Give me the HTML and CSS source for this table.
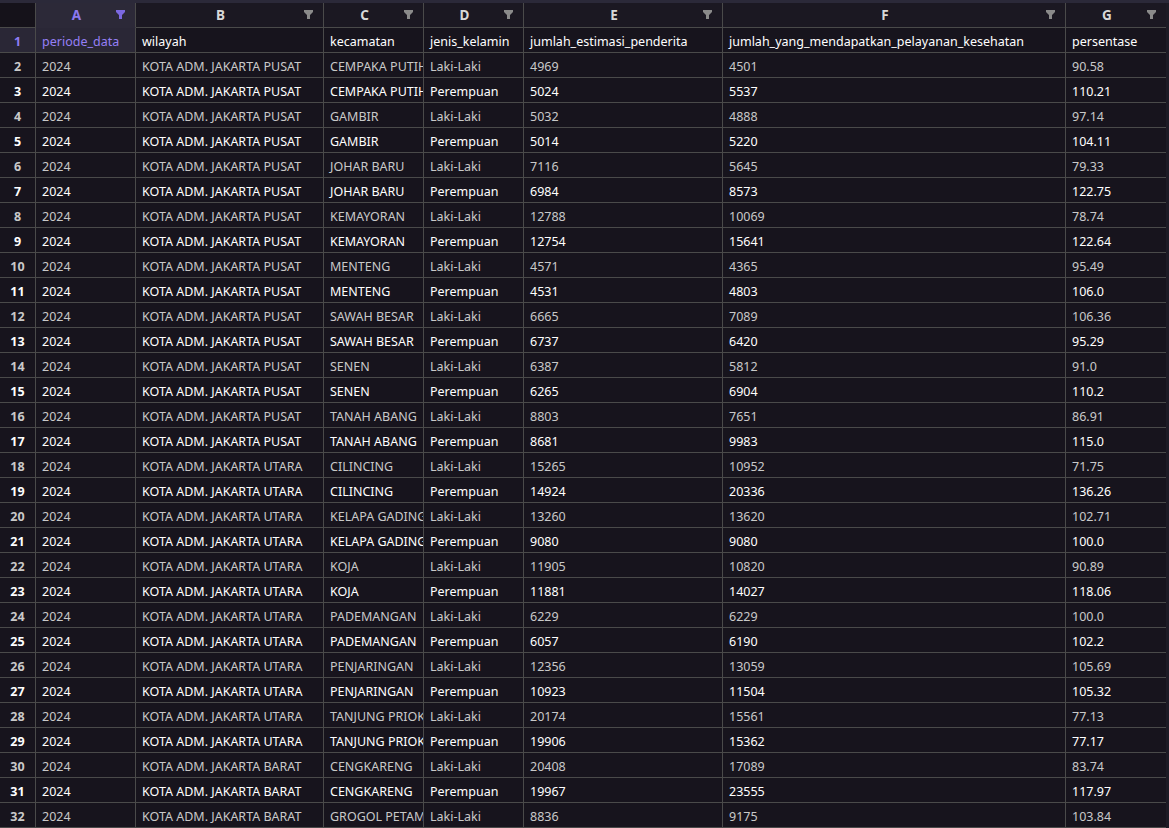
FILE: index.html
```html
<!DOCTYPE html>
<html lang="id">
<head>
<meta charset="utf-8">
<title>Data</title>
<link rel="stylesheet" href="styles.css">
</head>
<body>
<div class="topstrip"></div>
<div class="sheet">
  <div class="row head">
    <div class="c num corner"></div>
    <div class="c col sel">A<svg class="flt" viewBox="0 0 9 9"><path d="M0 0h9v2L6 5v4H3V5L0 2z"/></svg></div>
    <div class="c col">B<svg class="flt" viewBox="0 0 9 9"><path d="M0 0h9v2L6 5v4H3V5L0 2z"/></svg></div>
    <div class="c col">C<svg class="flt" viewBox="0 0 9 9"><path d="M0 0h9v2L6 5v4H3V5L0 2z"/></svg></div>
    <div class="c col">D<svg class="flt" viewBox="0 0 9 9"><path d="M0 0h9v2L6 5v4H3V5L0 2z"/></svg></div>
    <div class="c col">E<svg class="flt" viewBox="0 0 9 9"><path d="M0 0h9v2L6 5v4H3V5L0 2z"/></svg></div>
    <div class="c col">F<svg class="flt" viewBox="0 0 9 9"><path d="M0 0h9v2L6 5v4H3V5L0 2z"/></svg></div>
    <div class="c col">G<svg class="flt" viewBox="0 0 9 9"><path d="M0 0h9v2L6 5v4H3V5L0 2z"/></svg></div>
  </div>
  <div class="row odd">
    <div class="c num sel">1</div><div class="c sel">periode_data</div><div class="c">wilayah</div><div class="c">kecamatan</div><div class="c">jenis_kelamin</div><div class="c">jumlah_estimasi_penderita</div><div class="c">jumlah_yang_mendapatkan_pelayanan_kesehatan</div><div class="c">persentase</div>
  </div>
  <div class="row even"><div class="c num">2</div><div class="c">2024</div><div class="c">KOTA ADM. JAKARTA PUSAT</div><div class="c">CEMPAKA PUTIH</div><div class="c">Laki-Laki</div><div class="c">4969</div><div class="c">4501</div><div class="c">90.58</div></div>
  <div class="row odd"><div class="c num">3</div><div class="c">2024</div><div class="c">KOTA ADM. JAKARTA PUSAT</div><div class="c">CEMPAKA PUTIH</div><div class="c">Perempuan</div><div class="c">5024</div><div class="c">5537</div><div class="c">110.21</div></div>
  <div class="row even"><div class="c num">4</div><div class="c">2024</div><div class="c">KOTA ADM. JAKARTA PUSAT</div><div class="c">GAMBIR</div><div class="c">Laki-Laki</div><div class="c">5032</div><div class="c">4888</div><div class="c">97.14</div></div>
  <div class="row odd"><div class="c num">5</div><div class="c">2024</div><div class="c">KOTA ADM. JAKARTA PUSAT</div><div class="c">GAMBIR</div><div class="c">Perempuan</div><div class="c">5014</div><div class="c">5220</div><div class="c">104.11</div></div>
  <div class="row even"><div class="c num">6</div><div class="c">2024</div><div class="c">KOTA ADM. JAKARTA PUSAT</div><div class="c">JOHAR BARU</div><div class="c">Laki-Laki</div><div class="c">7116</div><div class="c">5645</div><div class="c">79.33</div></div>
  <div class="row odd"><div class="c num">7</div><div class="c">2024</div><div class="c">KOTA ADM. JAKARTA PUSAT</div><div class="c">JOHAR BARU</div><div class="c">Perempuan</div><div class="c">6984</div><div class="c">8573</div><div class="c">122.75</div></div>
  <div class="row even"><div class="c num">8</div><div class="c">2024</div><div class="c">KOTA ADM. JAKARTA PUSAT</div><div class="c">KEMAYORAN</div><div class="c">Laki-Laki</div><div class="c">12788</div><div class="c">10069</div><div class="c">78.74</div></div>
  <div class="row odd"><div class="c num">9</div><div class="c">2024</div><div class="c">KOTA ADM. JAKARTA PUSAT</div><div class="c">KEMAYORAN</div><div class="c">Perempuan</div><div class="c">12754</div><div class="c">15641</div><div class="c">122.64</div></div>
  <div class="row even"><div class="c num">10</div><div class="c">2024</div><div class="c">KOTA ADM. JAKARTA PUSAT</div><div class="c">MENTENG</div><div class="c">Laki-Laki</div><div class="c">4571</div><div class="c">4365</div><div class="c">95.49</div></div>
  <div class="row odd"><div class="c num">11</div><div class="c">2024</div><div class="c">KOTA ADM. JAKARTA PUSAT</div><div class="c">MENTENG</div><div class="c">Perempuan</div><div class="c">4531</div><div class="c">4803</div><div class="c">106.0</div></div>
  <div class="row even"><div class="c num">12</div><div class="c">2024</div><div class="c">KOTA ADM. JAKARTA PUSAT</div><div class="c">SAWAH BESAR</div><div class="c">Laki-Laki</div><div class="c">6665</div><div class="c">7089</div><div class="c">106.36</div></div>
  <div class="row odd"><div class="c num">13</div><div class="c">2024</div><div class="c">KOTA ADM. JAKARTA PUSAT</div><div class="c">SAWAH BESAR</div><div class="c">Perempuan</div><div class="c">6737</div><div class="c">6420</div><div class="c">95.29</div></div>
  <div class="row even"><div class="c num">14</div><div class="c">2024</div><div class="c">KOTA ADM. JAKARTA PUSAT</div><div class="c">SENEN</div><div class="c">Laki-Laki</div><div class="c">6387</div><div class="c">5812</div><div class="c">91.0</div></div>
  <div class="row odd"><div class="c num">15</div><div class="c">2024</div><div class="c">KOTA ADM. JAKARTA PUSAT</div><div class="c">SENEN</div><div class="c">Perempuan</div><div class="c">6265</div><div class="c">6904</div><div class="c">110.2</div></div>
  <div class="row even"><div class="c num">16</div><div class="c">2024</div><div class="c">KOTA ADM. JAKARTA PUSAT</div><div class="c">TANAH ABANG</div><div class="c">Laki-Laki</div><div class="c">8803</div><div class="c">7651</div><div class="c">86.91</div></div>
  <div class="row odd"><div class="c num">17</div><div class="c">2024</div><div class="c">KOTA ADM. JAKARTA PUSAT</div><div class="c">TANAH ABANG</div><div class="c">Perempuan</div><div class="c">8681</div><div class="c">9983</div><div class="c">115.0</div></div>
  <div class="row even"><div class="c num">18</div><div class="c">2024</div><div class="c">KOTA ADM. JAKARTA UTARA</div><div class="c">CILINCING</div><div class="c">Laki-Laki</div><div class="c">15265</div><div class="c">10952</div><div class="c">71.75</div></div>
  <div class="row odd"><div class="c num">19</div><div class="c">2024</div><div class="c">KOTA ADM. JAKARTA UTARA</div><div class="c">CILINCING</div><div class="c">Perempuan</div><div class="c">14924</div><div class="c">20336</div><div class="c">136.26</div></div>
  <div class="row even"><div class="c num">20</div><div class="c">2024</div><div class="c">KOTA ADM. JAKARTA UTARA</div><div class="c">KELAPA GADING</div><div class="c">Laki-Laki</div><div class="c">13260</div><div class="c">13620</div><div class="c">102.71</div></div>
  <div class="row odd"><div class="c num">21</div><div class="c">2024</div><div class="c">KOTA ADM. JAKARTA UTARA</div><div class="c">KELAPA GADING</div><div class="c">Perempuan</div><div class="c">9080</div><div class="c">9080</div><div class="c">100.0</div></div>
  <div class="row even"><div class="c num">22</div><div class="c">2024</div><div class="c">KOTA ADM. JAKARTA UTARA</div><div class="c">KOJA</div><div class="c">Laki-Laki</div><div class="c">11905</div><div class="c">10820</div><div class="c">90.89</div></div>
  <div class="row odd"><div class="c num">23</div><div class="c">2024</div><div class="c">KOTA ADM. JAKARTA UTARA</div><div class="c">KOJA</div><div class="c">Perempuan</div><div class="c">11881</div><div class="c">14027</div><div class="c">118.06</div></div>
  <div class="row even"><div class="c num">24</div><div class="c">2024</div><div class="c">KOTA ADM. JAKARTA UTARA</div><div class="c">PADEMANGAN</div><div class="c">Laki-Laki</div><div class="c">6229</div><div class="c">6229</div><div class="c">100.0</div></div>
  <div class="row odd"><div class="c num">25</div><div class="c">2024</div><div class="c">KOTA ADM. JAKARTA UTARA</div><div class="c">PADEMANGAN</div><div class="c">Perempuan</div><div class="c">6057</div><div class="c">6190</div><div class="c">102.2</div></div>
  <div class="row even"><div class="c num">26</div><div class="c">2024</div><div class="c">KOTA ADM. JAKARTA UTARA</div><div class="c">PENJARINGAN</div><div class="c">Laki-Laki</div><div class="c">12356</div><div class="c">13059</div><div class="c">105.69</div></div>
  <div class="row odd"><div class="c num">27</div><div class="c">2024</div><div class="c">KOTA ADM. JAKARTA UTARA</div><div class="c">PENJARINGAN</div><div class="c">Perempuan</div><div class="c">10923</div><div class="c">11504</div><div class="c">105.32</div></div>
  <div class="row even"><div class="c num">28</div><div class="c">2024</div><div class="c">KOTA ADM. JAKARTA UTARA</div><div class="c">TANJUNG PRIOK</div><div class="c">Laki-Laki</div><div class="c">20174</div><div class="c">15561</div><div class="c">77.13</div></div>
  <div class="row odd"><div class="c num">29</div><div class="c">2024</div><div class="c">KOTA ADM. JAKARTA UTARA</div><div class="c">TANJUNG PRIOK</div><div class="c">Perempuan</div><div class="c">19906</div><div class="c">15362</div><div class="c">77.17</div></div>
  <div class="row even"><div class="c num">30</div><div class="c">2024</div><div class="c">KOTA ADM. JAKARTA BARAT</div><div class="c">CENGKARENG</div><div class="c">Laki-Laki</div><div class="c">20408</div><div class="c">17089</div><div class="c">83.74</div></div>
  <div class="row odd"><div class="c num">31</div><div class="c">2024</div><div class="c">KOTA ADM. JAKARTA BARAT</div><div class="c">CENGKARENG</div><div class="c">Perempuan</div><div class="c">19967</div><div class="c">23555</div><div class="c">117.97</div></div>
  <div class="row even"><div class="c num">32</div><div class="c">2024</div><div class="c">KOTA ADM. JAKARTA BARAT</div><div class="c">GROGOL PETAMBURAN</div><div class="c">Laki-Laki</div><div class="c">8836</div><div class="c">9175</div><div class="c">103.84</div></div>
</div>
</body>
</html>
```
FILE: styles.css
```css
* { box-sizing: border-box; }
html, body {
  margin: 0;
  padding: 0;
  background: #1d1b25;
  overflow: hidden;
}
body {
  font-family: "Noto Sans", "Open Sans", sans-serif;
  font-size: 12.5px;
  color: #d2d2d2;
}
.topstrip {
  height: 3px;
  background: #2b2939;
}
.sheet {
  width: 1166px;
  border-right: 1px solid #4a4a4a;
}
.row {
  display: grid;
  grid-template-columns: 36px 100px 188px 100px 100px 199px 343px 100px;
  height: 25px;
}
.c {
  background: #17141d;
  border-right: 1px solid #4a4a4a;
  border-bottom: 1px solid #4a4a4a;
  padding: 3px 6px 0;
  white-space: nowrap;
  overflow: hidden;
  line-height: 21px;
}
.c:last-child { border-right: none; }
.head .c {
  background: #1b1822;
  text-align: center;
  font-weight: 700;
  font-size: 13.5px;
  color: #d8d8d8;
  position: relative;
  padding: 1px 18px 0 0;
  line-height: 23px;
}
.head .corner { background: #15121a; padding: 0; }
.head .col.sel {
  background: #2c2938;
  color: #8b78f0;
  border-bottom-color: #2c2938;
}
.flt {
  position: absolute;
  right: 10px;
  top: 7px;
  width: 9px;
  height: 9px;
  fill: #8a8a8a;
}
.head .sel .flt { fill: #7b68e0; }
.num {
  text-align: center;
  font-weight: 700;
  color: #e6e6e6;
  padding-left: 0;
  padding-right: 0;
}
.c.sel { background: #2a2736; color: #957ff5; }
.num.sel { color: #8f7cf2; }
.even .c { color: #c9c9c9; }
.odd .c { color: #ffffff; }
.odd .c.sel { color: #957ff5; }
.odd .num.sel { color: #8f7cf2; }
```
